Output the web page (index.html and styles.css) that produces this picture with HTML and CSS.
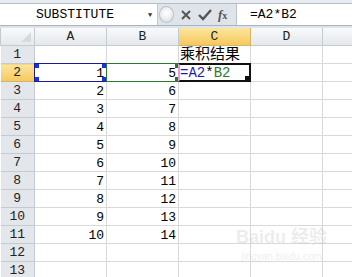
FILE: index.html
```html
<!DOCTYPE html>
<html lang="zh-CN">
<head>
    <meta charset="UTF-8">
    <title>乘积结果</title>
    <link rel="stylesheet" href="styles.css">
</head>
<body>
<div class="excel">
    <div class="ribbon-edge"></div>
    <div class="formula-bar">
        <div class="name-box">
            <span class="name">SUBSTITUTE</span>
            <span class="drop">&#9660;</span>
        </div>
        <div class="fx-tools">
            <span class="knob"></span>
            <svg class="tool" width="12" height="12" viewBox="0 0 12 12"><path d="M2 2 L10 10 M10 2 L2 10" stroke="#555" stroke-width="2"/></svg>
            <svg class="tool" width="14" height="12" viewBox="0 0 14 12"><path d="M1 6 L5 10 L13 1" stroke="#555" stroke-width="2.4" fill="none"/></svg>
            <span class="fx"><i>f</i><span>x</span></span>
        </div>
        <div class="formula">=A2*B2</div>
    </div>
    <div class="gap"></div>
    <table class="sheet">
        <colgroup>
            <col class="c-head"><col class="c-col"><col class="c-col"><col class="c-col"><col class="c-col"><col class="c-rest">
        </colgroup>
        <thead>
            <tr>
                <th class="corner"><span class="tri"></span></th>
                <th>A</th><th>B</th><th class="sel">C</th><th>D</th><th></th>
            </tr>
        </thead>
        <tbody>
            <tr><th>1</th><td></td><td></td><td class="txt">乘积结果</td><td></td><td></td></tr>
            <tr><th class="sel">2</th><td class="ref-a">1</td><td class="ref-b">5</td><td class="active txt"><span class="blue">=A2</span>*<span class="green">B2</span></td><td></td><td></td></tr>
            <tr><th>3</th><td>2</td><td>6</td><td></td><td></td><td></td></tr>
            <tr><th>4</th><td>3</td><td>7</td><td></td><td></td><td></td></tr>
            <tr><th>5</th><td>4</td><td>8</td><td></td><td></td><td></td></tr>
            <tr><th>6</th><td>5</td><td>9</td><td></td><td></td><td></td></tr>
            <tr><th>7</th><td>6</td><td>10</td><td></td><td></td><td></td></tr>
            <tr><th>8</th><td>7</td><td>11</td><td></td><td></td><td></td></tr>
            <tr><th>9</th><td>8</td><td>12</td><td></td><td></td><td></td></tr>
            <tr><th>10</th><td>9</td><td>13</td><td></td><td></td><td></td></tr>
            <tr><th>11</th><td>10</td><td>14</td><td></td><td></td><td></td></tr>
            <tr><th>12</th><td></td><td></td><td></td><td></td><td></td></tr>
            <tr><th>13</th><td></td><td></td><td></td><td></td><td></td></tr>
        </tbody>
    </table>
    <div class="watermark">
        <div class="wm-logo">Bai<span class="paw">du</span> 经验</div>
        <div class="wm-url">jingyan.baidu.com</div>
    </div>
</div>
</body>
</html>
```

FILE: styles.css
```css
body {
    margin: 0;
    background: #fff;
}
.excel {
    position: relative;
    width: 352px;
    height: 277px;
    overflow: hidden;
    background: #dfe4ea;
    font-family: "Liberation Mono", "DejaVu Sans Mono", monospace;
}
.ribbon-edge {
    height: 3px;
    background: #e8ecf1;
    border-bottom: 1px solid #b4bcc7;
}
.formula-bar {
    display: flex;
    height: 21px;
    background: #dfe4ea;
    border-bottom: 1px solid #aab3bf;
}
.name-box {
    display: flex;
    align-items: center;
    width: 157px;
    background: #fff;
    border-right: 1px solid #c2c9d2;
}
.name {
    flex: 1;
    text-align: center;
    font-size: 13px;
    color: #000;
    padding-left: 2px;
}
.drop {
    font-size: 7px;
    color: #333;
    width: 9px;
}
.fx-tools {
    display: flex;
    align-items: center;
    gap: 6px;
    width: 78px;
    border-right: 1px solid #b9c1cb;
}
.knob {
    width: 13px;
    height: 15px;
    margin-left: 1px;
    border-radius: 50%;
    border: 1px solid #b9c0c9;
    background: radial-gradient(circle at 50% 40%, #fff 0, #f1f3f5 40%, #d3d8de 100%);
}
.tool {
    display: block;
}
.fx {
    font-family: "Liberation Serif", serif;
    font-size: 13px;
    color: #555;
    font-weight: bold;
}
.fx span {
    font-size: 10px;
}
.formula {
    flex: 1;
    background: #fff;
    font-size: 13px;
    line-height: 21px;
    padding-left: 13px;
}
.gap {
    height: 2px;
}
.sheet {
    border-collapse: collapse;
    table-layout: fixed;
    width: 400px;
    background: #fff;
    font-size: 13px;
}
.c-head { width: 34px; }
.c-col { width: 72px; }
.c-rest { width: 78px; }
.sheet th {
    height: 17px;
    padding: 0;
    font-weight: normal;
    font-size: 13px;
    color: #222;
    border: 1px solid #c5cad1;
    background: #e3e7ec;
}
.sheet thead th {
    height: 17px;
    background: linear-gradient(#f8f9fa, #e4e8ec);
    border-color: #c5cad1;
    border-top: none;
}
.sheet th.sel {
    background: linear-gradient(#fbe59f, #f6c85c);
    border-color: #d6b56a;
}
.sheet tbody th {
    background: #e3e6ea;
    border-left: none;
}
.corner {
    position: relative;
}
.tri {
    position: absolute;
    right: 3px;
    bottom: 3px;
    width: 0;
    height: 0;
    border-left: 10px solid transparent;
    border-bottom: 10px solid #d6dadf;
}
.sheet td {
    height: 17px;
    padding: 0 2px 0 0;
    border: 1px solid #d9d9d9;
    text-align: right;
    vertical-align: bottom;
    line-height: 15px;
    white-space: nowrap;
    overflow: visible;
    color: #000;
}
.sheet td.txt {
    text-align: left;
    padding-left: 1px;
    font-size: 14px;
    font-family: "Liberation Mono", "Noto Sans CJK SC", monospace;
}
.sheet tr:first-child td.txt {
    font-size: 15px;
}
.blue { color: #1d1daa; }
.green { color: #2b7a2b; }
.ref-a, .ref-b, .active {
    position: relative;
}
.ref-a::after, .ref-b::after, .active::after {
    content: "";
    position: absolute;
    top: -1px;
    bottom: -1px;
    left: -1px;
    right: -1px;
}
.ref-a::after {
    border: 1px solid #1c1c9a;
    background:
        linear-gradient(#1432e6, #1432e6) left top / 4px 4px no-repeat,
        linear-gradient(#1432e6, #1432e6) left bottom / 4px 4px no-repeat,
        linear-gradient(#1432e6, #1432e6) right top / 4px 4px no-repeat,
        linear-gradient(#1432e6, #1432e6) right bottom / 4px 4px no-repeat;
}
.ref-b::after {
    border: 1px solid #2b7a2b;
    background:
        linear-gradient(#2b7a2b, #2b7a2b) right top / 3px 4px no-repeat,
        linear-gradient(#2b7a2b, #2b7a2b) right bottom / 3px 4px no-repeat;
}
.active::after {
    border: 2px solid #111;
    border-left: 2px solid #e79be0;
    background: linear-gradient(#111, #111) right bottom / 4px 4px no-repeat;
}
.watermark {
    position: absolute;
    left: 236px;
    top: 222px;
    color: rgba(190, 190, 190, 0.28);
    font-family: "Liberation Sans", "Noto Sans CJK SC", sans-serif;
    text-align: center;
    pointer-events: none;
}
.wm-logo {
    font-size: 18px;
    font-weight: bold;
}
.wm-url {
    font-size: 10px;
    margin-top: 3px;
}
```
